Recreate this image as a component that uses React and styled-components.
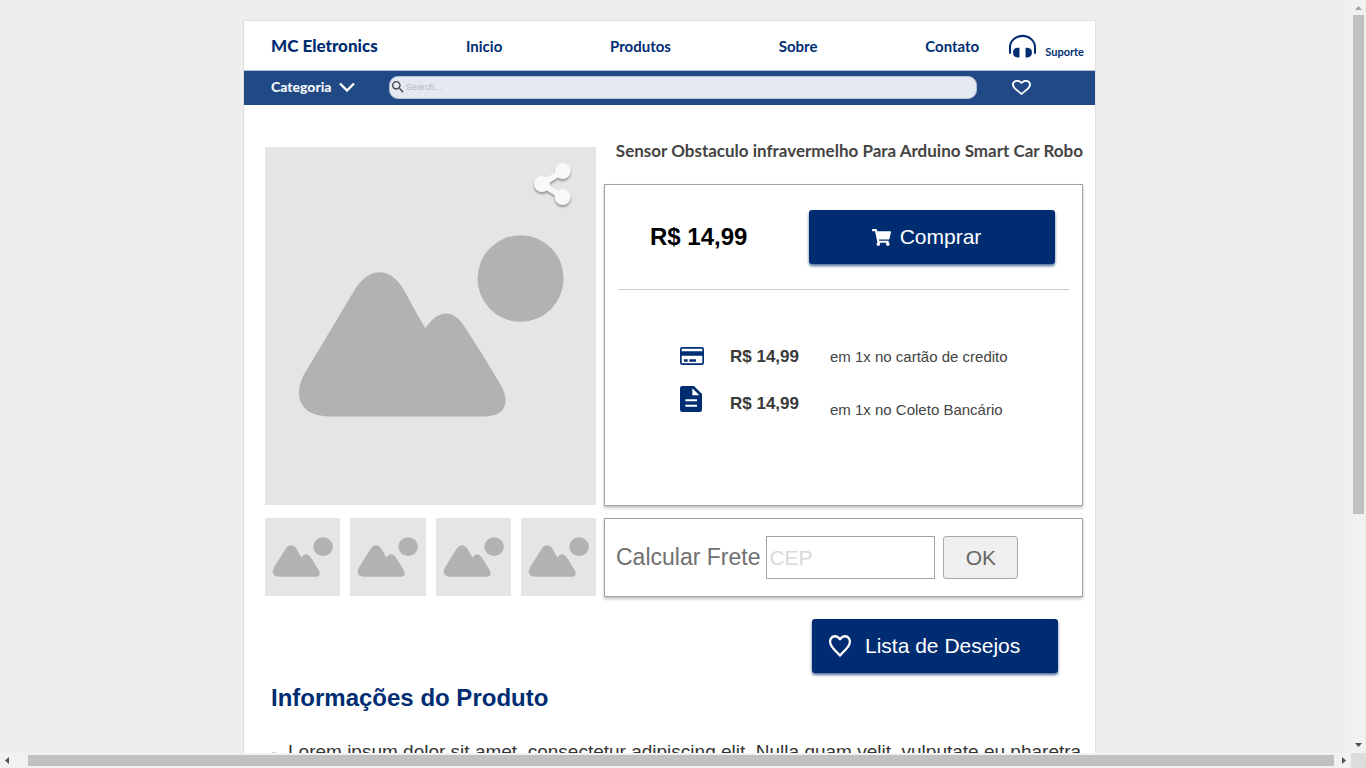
import React from "react";
import styled, { createGlobalStyle } from "styled-components";
import { FaShoppingCart } from "react-icons/fa";
import { MdSearch } from "react-icons/md";

const navy = "#002d72";
const display = 'Lato, "Open Sans", sans-serif';
const body = '"Liberation Sans", Arial, sans-serif';

const GlobalStyle = createGlobalStyle`
  *, *::before, *::after { box-sizing: border-box; }
  body { margin: 0; background: #eee; font-family: ${body}; }
  button, input { font-family: inherit; }
  h1, h2, p, ul { margin: 0; padding: 0; }
  svg { display: block; }
`;

const Screen = styled.div`
  display: grid;
  grid-template-columns: minmax(0, 1fr) 15px;
  grid-template-rows: minmax(0, 1fr) 15px;
  height: 100vh;
  overflow: hidden;
`;

const Viewport = styled.div`
  overflow: hidden;
  padding: 20px 12px 0 0;
`;

const ScrollTrack = styled.div`
  display: flex;
  flex-direction: ${(p) => (p.$vertical ? "column" : "row")};
  justify-content: space-between;
  background: #f1f1f1;
`;

const ScrollArrow = styled.svg`
  flex: none;
  width: 15px;
  height: 15px;
  fill: ${(p) => (p.$dim ? "#a3a3a3" : "#505050")};
`;

const VerticalTrough = styled.div`
  flex: 1;
  padding: 0 2px;
`;

const VerticalThumb = styled.div`
  height: 69%;
  background: #c1c1c1;
`;

const HorizontalThumb = styled.div`
  flex: 1;
  margin: 2px 2px 2px 13px;
  background: #c1c1c1;
`;

const ScrollCorner = styled.div`
  background: #dcdcdc;
`;

const Paper = styled.div`
  max-width: 853px;
  min-height: 1200px;
  margin: 0 auto;
  background: #fff;
  border: 1px solid #e0e0e0;
`;

const Header = styled.header`
  display: flex;
  align-items: center;
  height: 50px;
  padding: 0 11px 0 27px;
  border-bottom: 1px solid #b3c1d6;
  font-family: ${display};
  font-weight: 700;
`;

const Logo = styled.a`
  flex: 0 0 195px;
  color: ${navy};
  font-size: 17px;
  font-weight: 900;
  text-decoration: none;
`;

const Nav = styled.nav`
  display: flex;
  flex: 1;
  justify-content: space-between;
`;

const NavLink = styled.a`
  color: ${navy};
  font-size: 15px;
  text-decoration: none;
`;

const Support = styled.a`
  display: flex;
  align-items: flex-end;
  gap: 9px;
  margin-left: 30px;
  color: ${navy};
  font-size: 11px;
  line-height: 12px;
  text-decoration: none;
`;

const Toolbar = styled.div`
  display: flex;
  align-items: center;
  height: 34px;
  padding: 0 64px 2px 27px;
  background: #204985;
`;

const CategoryButton = styled.button`
  display: flex;
  align-items: center;
  gap: 7px;
  flex: 0 0 118px;
  padding: 0;
  border: 0;
  background: none;
  color: #f3f6fa;
  font: 900 14px/20px ${display};
`;

const SearchBox = styled.label`
  display: flex;
  flex: 1;
  align-items: center;
  height: 23px;
  border: 1px solid #b4c1d6;
  border-radius: 9px;
  background: #e4e8f1;
  color: #3f4650;
`;

const SearchInput = styled.input`
  flex: 1;
  min-width: 0;
  padding: 0;
  border: 0;
  outline: 0;
  background: none;
  font-size: 9px;
  &::placeholder { color: #b4b7bf; opacity: 1; }
`;

const IconButton = styled.button`
  padding: 0;
  border: 0;
  background: none;
  color: #fff;
`;

const FavoriteButton = styled(IconButton)`
  margin-left: 35px;
`;

const Product = styled.main`
  display: grid;
  grid-template-columns: minmax(0, 331fr) minmax(0, 479fr);
  gap: 8px;
  padding: 34px 12px 0 21px;
`;

const Gallery = styled.section`
  padding-top: 8px;
`;

const Photo = styled.div`
  position: relative;
  height: 358px;
`;

const ShareButton = styled(IconButton)`
  position: absolute;
  top: 16px;
  right: 25px;
  filter: drop-shadow(0 2px 1px rgba(0, 0, 0, 0.35));
`;

const Thumbs = styled.div`
  display: grid;
  grid-template-columns: repeat(4, 1fr);
  gap: 10px;
  margin-top: 13px;
`;

const Thumb = styled(IconButton)`
  height: 78px;
`;

const Picture = styled.svg`
  width: 100%;
  height: 100%;
  background: #e5e5e5;
  fill: #b2b2b2;
`;

const Title = styled.h1`
  margin: 0 0 21px;
  color: #444;
  font: 700 17px/24px ${display};
  text-align: right;
  white-space: nowrap;
`;

const Panel = styled.section`
  border: 1px solid #a3a3a3;
  background: #fff;
  box-shadow: 0 2px 3px rgba(0, 0, 0, 0.25);
`;

const BuyPanel = styled(Panel)`
  height: 322px;
  padding: 25px 13px 0;
`;

const BuyRow = styled.div`
  display: flex;
  align-items: center;
  justify-content: space-between;
  padding: 0 14px 25px 32px;
  border-bottom: 1px solid #ccc;
`;

const Price = styled.strong`
  font-size: 24px;
`;

const PrimaryButton = styled.button`
  display: flex;
  align-items: center;
  justify-content: ${(p) => (p.$start ? "flex-start" : "center")};
  gap: ${(p) => (p.$start ? "14px" : "9px")};
  width: 246px;
  height: 54px;
  padding: ${(p) => (p.$start ? "0 17px" : "0 11px 0 0")};
  border: 0;
  border-radius: 3px;
  background: ${navy};
  box-shadow: 0 2px 3px rgba(0, 45, 114, 0.7);
  color: #fff;
  font-size: 21px;
`;

const Payments = styled.div`
  display: flex;
  padding: 57px 0 0 62px;
  color: #444;
`;

const PaymentIcons = styled.div`
  display: grid;
  align-content: start;
  gap: 21px;
  flex: 0 0 50px;
`;

const PaymentPrices = styled.div`
  display: grid;
  align-content: start;
  gap: 27px;
  flex: 0 0 100px;
  color: #3a3a3a;
  font: 700 17px/20px ${body};
`;

const PaymentTexts = styled.div`
  display: grid;
  align-content: start;
  gap: 33px;
  font-size: 15px;
  line-height: 20px;
`;

const ShippingPanel = styled(Panel)`
  display: flex;
  align-items: center;
  height: 79px;
  margin-top: 12px;
  padding-left: 11px;
`;

const ShippingLabel = styled.label`
  margin-right: 6px;
  color: #707070;
  font-size: 23px;
`;

const ZipInput = styled.input`
  width: 169px;
  height: 43px;
  padding: 0 2px;
  border: 1px solid #a3a3a3;
  font-size: 21px;
  &::placeholder { color: #d9d9d9; opacity: 1; }
`;

const OkButton = styled.button`
  width: 75px;
  height: 43px;
  margin-left: 8px;
  border: 1px solid #a9a9a9;
  border-radius: 3px;
  background: #efefef;
  color: #666;
  font-size: 21px;
`;

const WishRow = styled.div`
  display: flex;
  justify-content: flex-end;
  padding: 22px 25px 0 0;
`;

const Info = styled.section`
  padding: 11px 27px;
`;

const InfoTitle = styled.h2`
  color: ${navy};
  font-size: 24px;
  line-height: 28px;
`;

const InfoList = styled.ul`
  margin-top: 28px;
  list-style: none;
`;

const InfoItem = styled.li`
  display: flex;
  gap: 11px;
  color: #333;
  font-size: 19px;
  line-height: 24px;
  white-space: nowrap;
  &::before {
    content: "";
    flex: 0 0 6px;
    height: 6px;
    margin-top: 12px;
    border-radius: 3px;
    background: #ccc;
  }
`;

function Landscape() {
  return (
    <Picture viewBox="29 80 992 1075" preserveAspectRatio="none" aria-hidden="true">
      <ellipse cx="795" cy="475" rx="129" ry="130" />
      <path d="M145 765 L297 510 C340 439 401 440 441 502 C466 545 484 584 510 624 C548 567 590 568 622 612 Q684 704 738 799 C767 855 741 889 690 889 H220 C137 889 112 831 145 765 Z" />
    </Picture>
  );
}

function Heart({ width, height }) {
  return (
    <svg width={width} height={height} viewBox="2 3 20 18.35" preserveAspectRatio="none" fill="currentColor" aria-hidden="true">
      <path d="M16.5 3c-1.74 0-3.41.81-4.5 2.09C10.91 3.81 9.24 3 7.5 3 4.42 3 2 5.42 2 8.5c0 3.78 3.4 6.86 8.55 11.54L12 21.35l1.45-1.32C18.6 15.36 22 12.28 22 8.5 22 5.42 19.58 3 16.5 3zm-4.4 15.55l-.1.1-.1-.1C7.14 14.24 4 11.39 4 8.5 4 6.5 5.5 5 7.5 5c1.54 0 3.04.99 3.57 2.36h1.87C13.46 5.99 14.96 5 16.5 5c2 0 3.5 1.5 3.5 3.5 0 2.89-3.14 5.74-7.9 10.05z" />
    </svg>
  );
}

function Headphones() {
  return (
    <svg width="27" height="24" viewBox="1049 73 80 70" aria-hidden="true">
      <path d="M1052 131V112a37 34 0 0 1 74 0V131" fill="none" stroke="currentColor" strokeWidth="6" />
      <path d="M1080 113v29h-5q-14-1-14-15t14-14zM1098 113h5q14 1 14 14t-14 15h-5z" fill="currentColor" />
    </svg>
  );
}

function Chevron() {
  return (
    <svg width="16" height="10" viewBox="0 0 16 10" fill="none" stroke="#fff" strokeWidth="2.4" aria-hidden="true">
      <path d="M1 1.5l7 7 7-7" />
    </svg>
  );
}

function Share() {
  return (
    <svg width="37" height="42" viewBox="835 129 111 126" fill="#f8f8f8" aria-hidden="true">
      <path d="M921 153l-62 39 62 39" fill="none" stroke="#f8f8f8" strokeWidth="17" />
      <circle cx="921" cy="153" r="24" />
      <circle cx="859" cy="192" r="24" />
      <circle cx="921" cy="231" r="24" />
    </svg>
  );
}

function CardIcon() {
  return (
    <svg width="24" height="18" viewBox="0 0 72 54" aria-hidden="true">
      <rect x="2.5" y="2.5" width="67" height="49" rx="4" fill="#fff" stroke={navy} strokeWidth="5" />
      <path d="M3 13h66v13H3zM12 37h11v7H12zM28 37h20v7H28z" fill={navy} />
    </svg>
  );
}

function DocumentIcon() {
  return (
    <svg width="22" height="26" viewBox="0 0 66 78" aria-hidden="true">
      <path d="M7 0h35l24 24v47q0 7-7 7H7q-7 0-7-7V7q0-7 7-7z" fill={navy} />
      <path d="M37 7v21h21zM16 40h35v6H16zM16 56h35v6H16z" fill="#fff" />
    </svg>
  );
}

const links = ["Inicio", "Produtos", "Sobre", "Contato"];

export default function App() {
  return (
    <>
      <GlobalStyle />
      <Screen>
        <Viewport>
          <Paper>
            <Header>
              <Logo href="#">MC Eletronics</Logo>
              <Nav>
                {links.map((name) => (
                  <NavLink key={name} href="#">{name}</NavLink>
                ))}
              </Nav>
              <Support href="#">
                <Headphones />
                Suporte
              </Support>
            </Header>
            <Toolbar>
              <CategoryButton>
                Categoria
                <Chevron />
              </CategoryButton>
              <SearchBox>
                <MdSearch size={16} aria-hidden="true" />
                <SearchInput type="search" aria-label="Search" placeholder="Search..." />
              </SearchBox>
              <FavoriteButton aria-label="Favoritos">
                <Heart width="19" height="15" />
              </FavoriteButton>
            </Toolbar>

            <Product>
              <Gallery>
                <Photo>
                  <Landscape />
                  <ShareButton aria-label="Compartilhar">
                    <Share />
                  </ShareButton>
                </Photo>
                <Thumbs>
                  {[1, 2, 3, 4].map((n) => (
                    <Thumb key={n} aria-label={`Imagem ${n}`}>
                      <Landscape />
                    </Thumb>
                  ))}
                </Thumbs>
              </Gallery>

              <div>
                <Title>Sensor Obstaculo infravermelho Para Arduino Smart Car Robo</Title>
                <BuyPanel>
                  <BuyRow>
                    <Price>R$ 14,99</Price>
                    <PrimaryButton>
                      <FaShoppingCart size={19} aria-hidden="true" />
                      Comprar
                    </PrimaryButton>
                  </BuyRow>
                  <Payments>
                    <PaymentIcons>
                      <CardIcon />
                      <DocumentIcon />
                    </PaymentIcons>
                    <PaymentPrices>
                      <span>R$ 14,99</span>
                      <span>R$ 14,99</span>
                    </PaymentPrices>
                    <PaymentTexts>
                      <span>em 1x no cartão de credito</span>
                      <span>em 1x no Coleto Bancário</span>
                    </PaymentTexts>
                  </Payments>
                </BuyPanel>
                <ShippingPanel>
                  <ShippingLabel htmlFor="cep">Calcular Frete</ShippingLabel>
                  <ZipInput id="cep" type="text" placeholder="CEP" />
                  <OkButton>OK</OkButton>
                </ShippingPanel>
                <WishRow>
                  <PrimaryButton $start>
                    <Heart width="22" height="22" />
                    Lista de Desejos
                  </PrimaryButton>
                </WishRow>
              </div>
            </Product>

            <Info>
              <InfoTitle>Informações do Produto</InfoTitle>
              <InfoList>
                <InfoItem>
                  Lorem ipsum dolor sit amet, consectetur adipiscing elit. Nulla quam velit, vulputate eu pharetra
                </InfoItem>
              </InfoList>
            </Info>
          </Paper>
        </Viewport>
        <ScrollTrack $vertical>
          <ScrollArrow $dim viewBox="0 0 15 15"><path d="M4 10h7L7.500 6z" /></ScrollArrow>
          <VerticalTrough>
            <VerticalThumb />
          </VerticalTrough>
          <ScrollArrow viewBox="0 0 15 15"><path d="M4 5h7L7.500 9z" /></ScrollArrow>
        </ScrollTrack>
        <ScrollTrack>
          <ScrollArrow viewBox="0 0 15 15"><path d="M9 4v7L5 7.500z" /></ScrollArrow>
          <HorizontalThumb />
          <ScrollArrow viewBox="0 0 15 15"><path d="M6 4v7l4-3.500z" /></ScrollArrow>
        </ScrollTrack>
        <ScrollCorner />
      </Screen>
    </>
  );
}
